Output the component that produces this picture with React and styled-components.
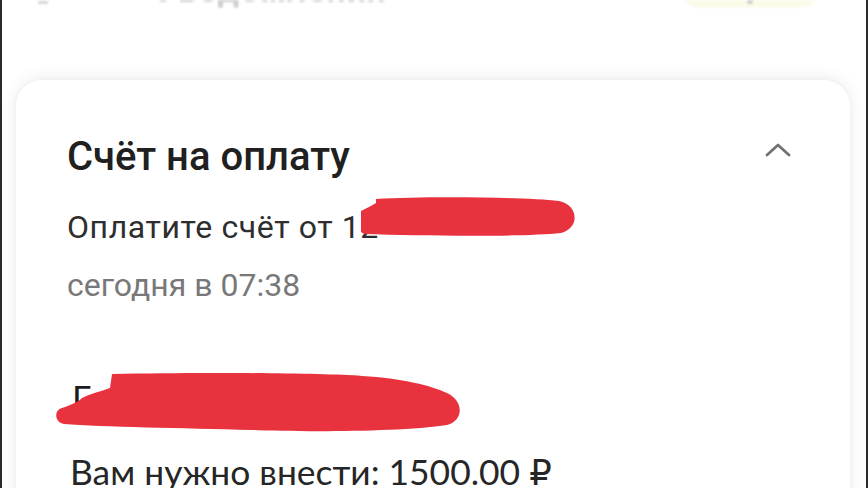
import React from "react";
import styled, { createGlobalStyle } from "styled-components";

const Global = createGlobalStyle`
  html, body { margin: 0; padding: 0; background: #ffffff; }
  body { width: 868px; height: 488px; overflow: hidden; }
`;

const Frame = styled.div`
  box-sizing: border-box;
  width: 868px;
  height: 488px;
  overflow: hidden;
  background: #fff;
  border-left: 2px solid #2b2b2b;
  border-right: 2px solid #2b2b2b;
  display: flex;
  flex-direction: column;
  font-family: Roboto, "Noto Sans", sans-serif;
`;

const Header = styled.div`
  flex-shrink: 0;
  height: 8px;
  overflow: hidden;
  display: flex;
  align-items: flex-end;
  padding: 0 46px 0 36px;
  filter: blur(0.8px);
`;

const BackGlyph = styled.span`
  width: 10px;
  height: 3px;
  background: #d6d6d6;
  margin-bottom: 4px;
`;

const HeaderTitle = styled.span`
  margin-left: 108px;
  font-size: 34px;
  font-weight: 700;
  line-height: 34px;
  color: #cdcdcd;
  margin-bottom: 1px;
  letter-spacing: 1px;
`;

const HeaderPill = styled.span`
  margin-left: auto;
  width: 140px;
  height: 40px;
  border-radius: 20px;
  background: #fcfbea;
  display: flex;
  align-items: flex-end;
  justify-content: center;
  padding-bottom: 4px;
  box-sizing: border-box;
`;

const PillDot = styled.span`
  width: 6px;
  height: 4px;
  border-radius: 2px;
  background: #cccccc;
`;

const Card = styled.section`
  position: relative;
  flex-shrink: 0;
  height: 420px;
  margin: 72px 16px 0 14px;
  background: #fff;
  border-radius: 26px 26px 0 0;
  box-shadow: 0 -2px 18px rgba(0, 0, 0, 0.07), 0 0 6px rgba(0, 0, 0, 0.04);
  padding: 54px 59px 0 51px;
  display: flex;
  flex-direction: column;
`;

const TitleRow = styled.div`
  display: flex;
  align-items: flex-start;
  justify-content: space-between;
`;

const Title = styled.h2`
  margin: 0;
  font-family: Roboto, sans-serif;
  font-weight: 500;
  font-size: 40px;
  line-height: 46px;
  color: #202020;
`;

const Chevron = styled.svg`
  width: 26px;
  height: 16px;
  margin-top: 8px;
`;

const Line = styled.p`
  margin: ${(p) => p.$top}px 0 0;
  font-family: Roboto, sans-serif;
  font-size: 32px;
  line-height: 36px;
  color: ${(p) => p.$color};
  letter-spacing: ${(p) => p.$spacing || 0}px;
`;

const Body = styled.div`
  margin-top: 74px;
  padding-left: 3px;
  font-family: Lato, "DejaVu Sans", sans-serif;
  color: #222;
`;

const HiddenLine = styled.p`
  margin: 0;
  padding-left: 2px;
  font-size: 35px;
  line-height: 40px;
  color: #1c1c1c;
`;

const Amount = styled.p`
  margin: 35px 0 0;
  font-size: 35.4px;
  line-height: 40px;
  color: #262626;
  white-space: nowrap;
`;

const Redact = styled.svg`
  position: absolute;
  left: ${(p) => p.$x}px;
  top: ${(p) => p.$y}px;
  filter: blur(0.5px);
`;

export default function App() {
  return (
    <>
      <Global />
      <Frame>
        <Header>
          <BackGlyph />
          <HeaderTitle>Уведомления</HeaderTitle>
          <HeaderPill>
            <PillDot />
          </HeaderPill>
        </Header>
        <Card>
          <TitleRow>
            <Title>Счёт на оплату</Title>
            <Chevron viewBox="0 0 26 16" fill="none">
              <path d="M2 13 L13 3 L24 13" stroke="#737373" strokeWidth="2.8" strokeLinecap="round" strokeLinejoin="round" />
            </Chevron>
          </TitleRow>
          <Line $top={29} $color="#2e2e2e" $spacing={0.6}>Оплатите счёт от 12</Line>
          <Line $top={22} $color="#787878">сегодня в 07:38</Line>
          <Body>
            <HiddenLine>Г</HiddenLine>
            <Amount>Вам нужно внести: 1500.00 ₽</Amount>
          </Body>
          <Redact $x={345} $y={116} width="222" height="42" viewBox="0 0 222 42">
            <path d="M15,3 C63,0 163,1 198,5 C218,9 219,32 200,37 C163,41 63,40 3,38 L0,36 L0,15 C5,12 11,10 15,7 Z" fill="#e8333f" />
          </Redact>
          <Redact $x={38} $y={290} width="412" height="64" viewBox="0 0 412 64">
            <path d="M58,4 C148,2 268,3 308,6 C348,8 378,16 393,23 C410,31 410,50 393,55 C348,62 248,62 198,60 C128,58 48,57 10,54 C0,52 0,40 8,38 C16,35 23,33 28,28 C38,23 48,21 56,18 Z" fill="#e8333f" />
          </Redact>
        </Card>
      </Frame>
    </>
  );
}
